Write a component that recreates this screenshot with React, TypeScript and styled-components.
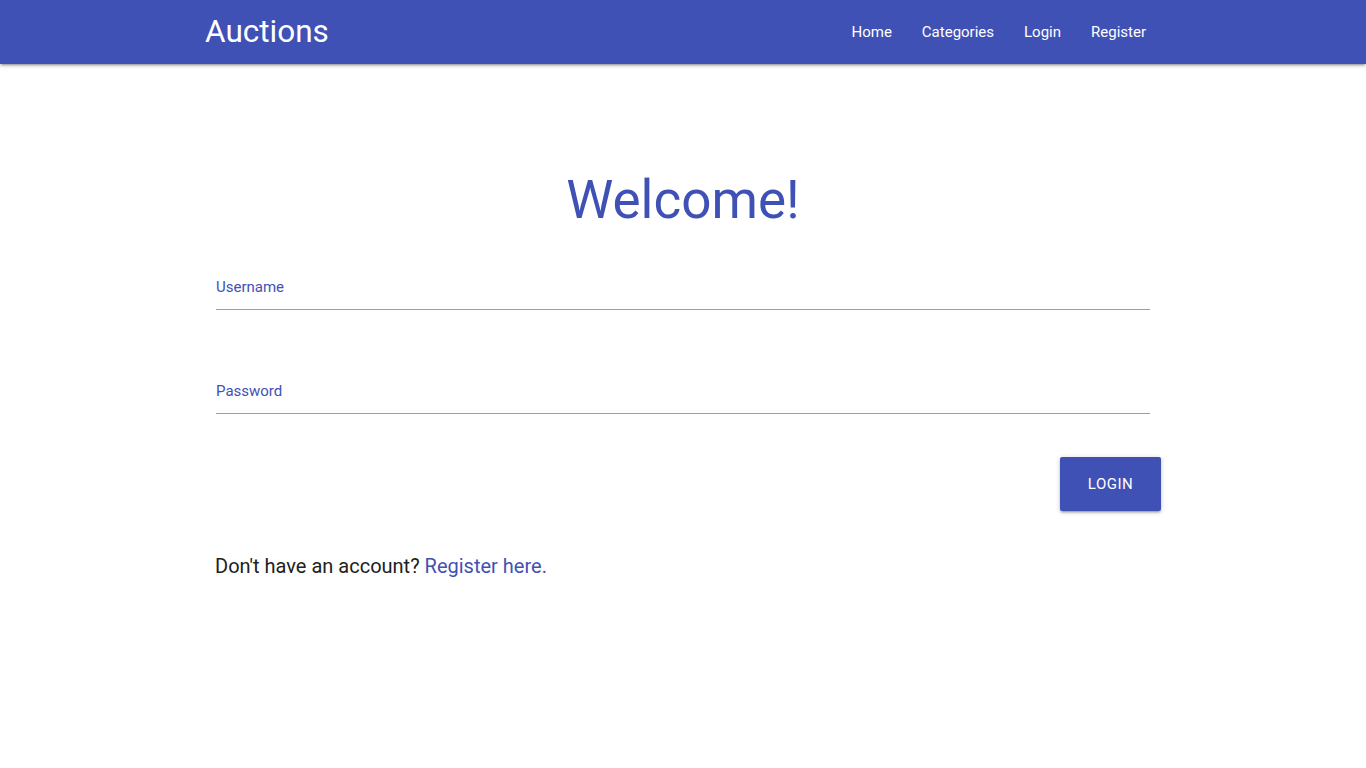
import React from "react";
import styled, { createGlobalStyle } from "styled-components";

const Global = createGlobalStyle`
  html, body { margin: 0; padding: 0; background: #fff; }
  body { font-family: Roboto, "Noto Sans", sans-serif; color: #212121; }
  * { box-sizing: border-box; }
`;

const Nav = styled.nav`
  height: 64px;
  background: #3f51b5;
  box-shadow: 0 2px 2px 0 rgba(0,0,0,0.14), 0 3px 1px -2px rgba(0,0,0,0.12), 0 1px 5px 0 rgba(0,0,0,0.2);
`;

const Container = styled.div`
  width: 956px;
  margin: 0 auto;
`;

const NavInner = styled(Container)`
  height: 64px;
  display: flex;
  align-items: center;
  justify-content: space-between;
`;

const Brand = styled.a`
  color: #fff;
  font-size: 31.5px;
  line-height: 64px;
  text-decoration: none;
`;

const Links = styled.ul`
  display: flex;
  list-style: none;
  margin: 0;
  padding: 0;
`;

const NavLink = styled.a`
  display: block;
  padding: 0 15px;
  color: #fff;
  font-size: 15px;
  line-height: 64px;
  text-decoration: none;
`;

const Main = styled(Container)`
  padding-top: 104px;
`;

const Title = styled.h1`
  margin: 0;
  text-align: center;
  font-weight: 400;
  font-size: 53px;
  line-height: 64px;
  color: #3f51b5;
`;

const Form = styled.form`
  padding: 46px 11px 0;
  display: flex;
  flex-direction: column;
`;

const Field = styled.div`
  & + & {
    margin-top: 72px;
  }
`;

const Label = styled.label`
  display: block;
  color: #3f51b5;
  font-size: 15px;
  line-height: 18px;
`;

const Input = styled.input`
  display: block;
  width: 100%;
  height: 14px;
  border: none;
  border-bottom: 1px solid #9e9e9e;
  outline: none;
  background: transparent;
  font: inherit;
  padding: 0;
`;

const Actions = styled.div`
  display: flex;
  justify-content: flex-end;
  margin: 43px -11px 0 0;
`;

const Button = styled.button`
  width: 101px;
  height: 54px;
  border: none;
  border-radius: 2px;
  background: #3f51b5;
  color: #fff;
  font-family: Roboto, sans-serif;
  font-size: 15px;
  letter-spacing: 0.5px;
  text-transform: uppercase;
  box-shadow: 0 2px 2px 0 rgba(0,0,0,0.14), 0 3px 1px -2px rgba(0,0,0,0.12), 0 1px 5px 0 rgba(0,0,0,0.2);
  cursor: pointer;
`;

const Footer = styled.p`
  margin: 41px 0 0 10px;
  font-size: 20px;
  line-height: 28px;
  color: #212121;
`;

const Link = styled.a`
  color: #3f51b5;
  text-decoration: none;
`;

export default function App() {
  return (
    <>
      <Global />
      <Nav>
        <NavInner>
          <Brand href="#">Auctions</Brand>
          <Links>
            <li><NavLink href="#">Home</NavLink></li>
            <li><NavLink href="#">Categories</NavLink></li>
            <li><NavLink href="#">Login</NavLink></li>
            <li><NavLink href="#">Register</NavLink></li>
          </Links>
        </NavInner>
      </Nav>
      <Main>
        <Title>Welcome!</Title>
        <Form onSubmit={(e) => e.preventDefault()}>
          <Field>
            <Label htmlFor="username">Username</Label>
            <Input id="username" type="text" />
          </Field>
          <Field>
            <Label htmlFor="password">Password</Label>
            <Input id="password" type="password" />
          </Field>
          <Actions>
            <Button type="submit">Login</Button>
          </Actions>
        </Form>
        <Footer>
          Don't have an account? <Link href="#">Register here.</Link>
        </Footer>
      </Main>
    </>
  );
}
